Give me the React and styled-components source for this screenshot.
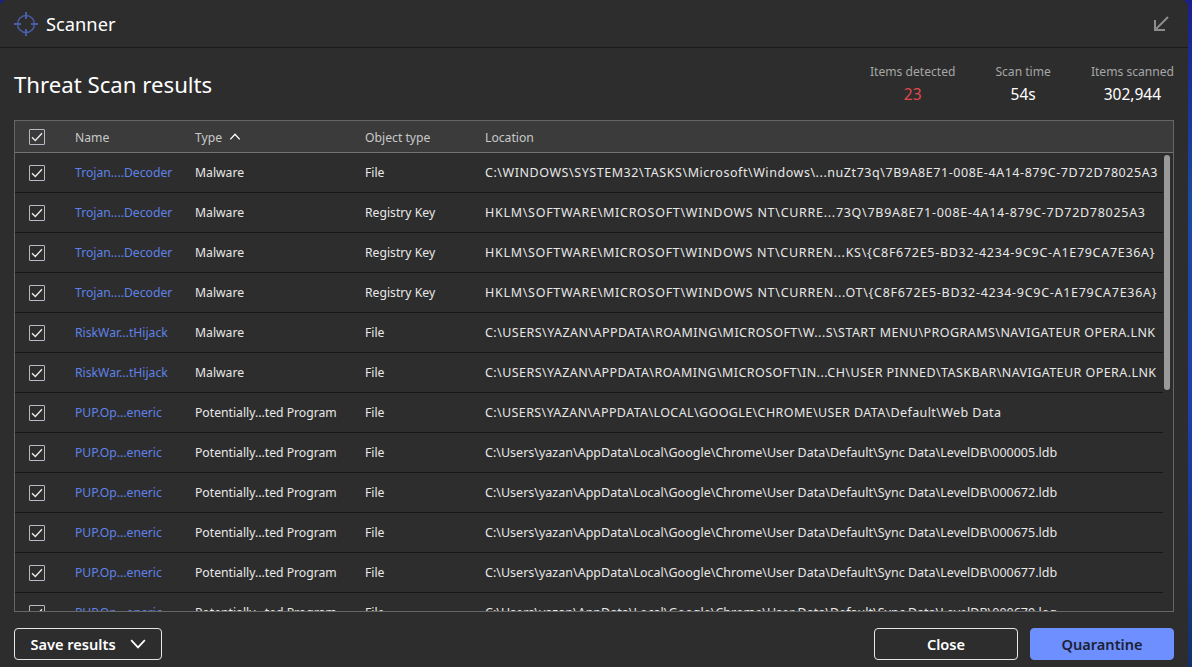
import styled, { createGlobalStyle } from 'styled-components';

const GlobalStyle = createGlobalStyle`
  html, body, #root {
    margin: 0;
    height: 100%;
  }
  body {
    overflow: hidden;
    background: linear-gradient(180deg, #1b1f8c 0%, #1b4a9e 30%, #1f3fae 60%, #14306c 100%);
    font-family: 'Noto Sans', 'Open Sans', sans-serif;
  }
  * {
    box-sizing: border-box;
  }
`;

const Window = styled.div`
  width: 1188px;
  height: 667px;
  display: flex;
  flex-direction: column;
  background: #2d2d2d;
  color: #fff;
  border-radius: 6px 6px 0 0;
`;

const TitleBar = styled.header`
  height: 48px;
  flex: none;
  display: flex;
  align-items: center;
  gap: 7px;
  padding: 0 18px 0 13px;
  border-bottom: 1px solid #1b1b1b;
`;

const AppTitle = styled.h1`
  flex: 1;
  margin: 0;
  font-size: 18.3px;
  font-weight: 400;
  line-height: 46px;
`;

const ResultsHead = styled.div`
  height: 72px;
  flex: none;
  display: flex;
  justify-content: space-between;
  padding: 0 14px;
`;

const Heading = styled.h2`
  margin: 22px 0 0;
  font-size: 22.2px;
  font-weight: 400;
  line-height: 29px;
`;

const Stats = styled.div`
  display: flex;
  gap: 40px;
  padding-top: 15px;
`;

const Stat = styled.div`
  display: flex;
  flex-direction: column;
  align-items: center;
  gap: 4px;
`;

const StatLabel = styled.span`
  font-size: 12.1px;
  line-height: 17px;
  color: #a6a6a6;
`;

const StatValue = styled.span`
  font-size: 15.5px;
  line-height: 20px;
  color: ${(p) => (p.$alert ? '#e2474c' : '#fff')};
`;

const Table = styled.div`
  position: relative;
  height: 492px;
  flex: none;
  margin: 0 14px;
  border: 1px solid #666;
  overflow: hidden;
`;

const Row = styled.div`
  display: grid;
  grid-template-columns: 60px 120px 170px 120px 1fr;
  align-items: center;
  height: ${(p) => (p.$head ? '32px' : '40px')};
  margin-right: ${(p) => (p.$head ? '0' : '10px')};
  padding-top: ${(p) => (p.$head ? '1px' : '0')};
  font-size: 12.2px;
  color: ${(p) => (p.$head ? '#c9c9c9' : '#e8e8e8')};
  background: ${(p) => (p.$head ? '#3b3b3b' : 'transparent')};
  border-bottom: 1px solid ${(p) => (p.$head ? '#737373' : '#171717')};
`;

const Cell = styled.div`
  display: flex;
  align-items: center;
  gap: 7px;
  white-space: nowrap;
`;

const CheckCell = styled(Cell)`
  padding-left: 14px;
`;

const LocationCell = styled(Cell)`
  font-size: 12.5px;
  letter-spacing: ${(p) => p.$spacing || 0}px;
`;

const NameLink = styled.a`
  color: #5f82e8;
`;

const CheckBox = styled.span`
  width: 16px;
  height: 16px;
  display: flex;
  align-items: center;
  justify-content: center;
  border: 1px solid #b9b9c4;
  border-radius: 1px;
`;

const ScrollThumb = styled.div`
  position: absolute;
  top: 34px;
  right: 3px;
  width: 6px;
  height: 235px;
  border-radius: 3px;
  background: #9a9a9a;
`;

const Footer = styled.footer`
  flex: 1;
  display: flex;
  align-items: flex-start;
  justify-content: space-between;
  padding: 16px 14px 0;
`;

const Actions = styled.div`
  display: flex;
  gap: 12px;
`;

const Button = styled.button`
  width: ${(p) => p.$width || '144px'};
  height: 32px;
  display: flex;
  align-items: center;
  justify-content: center;
  gap: 14px;
  padding: 0;
  font-family: inherit;
  font-size: 14.6px;
  font-weight: 600;
  color: ${(p) => (p.$primary ? '#1c2233' : '#fff')};
  background: ${(p) => (p.$primary ? '#6e8fff' : 'transparent')};
  border: 1px solid ${(p) => (p.$primary ? '#6e8fff' : '#e6e6e6')};
  border-radius: 4px;
`;

const ScannerIcon = () => (
  <svg width="26" height="26" viewBox="0 0 26 26" fill="none" stroke="#4a5ea8" strokeWidth="1.4">
    <circle cx="13" cy="13" r="8.5" />
    <path d="M13 1v7M13 18v7M1 13h7M18 13h7" strokeWidth="2" />
  </svg>
);

const CollapseIcon = () => (
  <svg width="18" height="18" viewBox="0 0 18 18" fill="none" stroke="#8c8c8c" strokeWidth="2">
    <path d="M16 2 3 15M3 5v10h10" />
  </svg>
);

const Tick = () => (
  <svg width="12" height="10" viewBox="0 0 12 10" fill="none" stroke="#eee" strokeWidth="1.3">
    <path d="M1 5.200 4.300 8.500 11 1.200" />
  </svg>
);

const Chevron = ({ up, size = 16 }) => (
  <svg width={size} height={size * 0.6} viewBox="0 0 14 8.400" fill="none" stroke="#fff" strokeWidth="1.5">
    <path d={up ? 'M1.500 7.500 7 1.500l5.500 6' : 'M1 1l6 6.400L13 1'} />
  </svg>
);

const PUP = 'PUP.Op...eneric';
const POT = 'Potentially...ted Program';
const LEVELDB = 'C:\\Users\\yazan\\AppData\\Local\\Google\\Chrome\\User Data\\Default\\Sync Data\\LevelDB\\';

const results = [
  ['Trojan....Decoder', 'Malware', 'File', 'C:\\WINDOWS\\SYSTEM32\\TASKS\\Microsoft\\Windows\\...nuZt73q\\7B9A8E71-008E-4A14-879C-7D72D78025A3', 0.55],
  ['Trojan....Decoder', 'Malware', 'Registry Key', 'HKLM\\SOFTWARE\\MICROSOFT\\WINDOWS NT\\CURRE...73Q\\7B9A8E71-008E-4A14-879C-7D72D78025A3', 0.71],
  ['Trojan....Decoder', 'Malware', 'Registry Key', 'HKLM\\SOFTWARE\\MICROSOFT\\WINDOWS NT\\CURREN...KS\\{C8F672E5-BD32-4234-9C9C-A1E79CA7E36A}', 0.7],
  ['Trojan....Decoder', 'Malware', 'Registry Key', 'HKLM\\SOFTWARE\\MICROSOFT\\WINDOWS NT\\CURREN...OT\\{C8F672E5-BD32-4234-9C9C-A1E79CA7E36A}', 0.71],
  ['RiskWar...tHijack', 'Malware', 'File', 'C:\\USERS\\YAZAN\\APPDATA\\ROAMING\\MICROSOFT\\W...S\\START MENU\\PROGRAMS\\NAVIGATEUR OPERA.LNK', 0.45],
  ['RiskWar...tHijack', 'Malware', 'File', 'C:\\USERS\\YAZAN\\APPDATA\\ROAMING\\MICROSOFT\\IN...CH\\USER PINNED\\TASKBAR\\NAVIGATEUR OPERA.LNK', 0.43],
  [PUP, POT, 'File', 'C:\\USERS\\YAZAN\\APPDATA\\LOCAL\\GOOGLE\\CHROME\\USER DATA\\Default\\Web Data', 0.39],
  [PUP, POT, 'File', LEVELDB + '000005.ldb', 0.01],
  [PUP, POT, 'File', LEVELDB + '000672.ldb', 0.01],
  [PUP, POT, 'File', LEVELDB + '000675.ldb', 0.01],
  [PUP, POT, 'File', LEVELDB + '000677.ldb', 0.01],
  [PUP, POT, 'File', LEVELDB + '000679.log', 0.01],
];

const App = () => {
  return (
    <Window>
      <GlobalStyle />
      <TitleBar>
        <ScannerIcon />
        <AppTitle>Scanner</AppTitle>
        <CollapseIcon />
      </TitleBar>

      <ResultsHead>
        <Heading>Threat Scan results</Heading>
        <Stats>
          <Stat>
            <StatLabel>Items detected</StatLabel>
            <StatValue $alert>23</StatValue>
          </Stat>
          <Stat>
            <StatLabel>Scan time</StatLabel>
            <StatValue>54s</StatValue>
          </Stat>
          <Stat>
            <StatLabel>Items scanned</StatLabel>
            <StatValue>302,944</StatValue>
          </Stat>
        </Stats>
      </ResultsHead>

      <Table>
        <Row $head>
          <CheckCell><CheckBox><Tick /></CheckBox></CheckCell>
          <Cell>Name</Cell>
          <Cell>Type <Chevron up size={12} /></Cell>
          <Cell>Object type</Cell>
          <Cell>Location</Cell>
        </Row>
        {results.map(([name, type, object, location, spacing], i) => (
          <Row key={i}>
            <CheckCell><CheckBox><Tick /></CheckBox></CheckCell>
            <Cell><NameLink>{name}</NameLink></Cell>
            <Cell>{type}</Cell>
            <Cell>{object}</Cell>
            <LocationCell $spacing={spacing}>{location}</LocationCell>
          </Row>
        ))}
        <ScrollThumb />
      </Table>

      <Footer>
        <Button $width="148px">Save results <Chevron /></Button>
        <Actions>
          <Button>Close</Button>
          <Button $primary>Quarantine</Button>
        </Actions>
      </Footer>
    </Window>
  );
};

export default App;
